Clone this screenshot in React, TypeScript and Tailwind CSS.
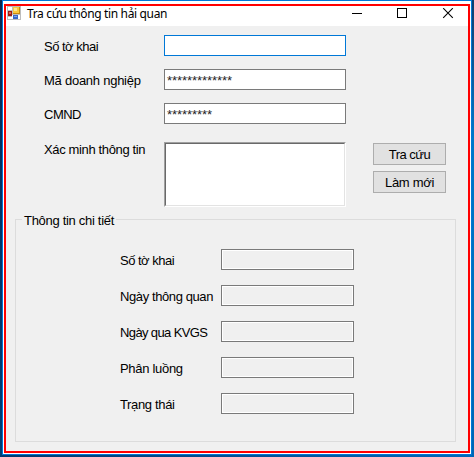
import React from "react";

type FieldProps = { label: string; labelClass: string; children: React.ReactNode };

function FormRow({ label, labelClass, children }: FieldProps) {
  return (
    <div className="flex h-[21px] items-start">
      <span className="w-[120px] shrink-0 pt-1 whitespace-nowrap">
        <span className={labelClass}>{label}</span>
      </span>
      {children}
    </div>
  );
}

function DetailRow({ label, labelClass }: { label: string; labelClass: string }) {
  return (
    <div className="flex h-[21px] items-start">
      <span className="w-[101px] shrink-0 pt-1 whitespace-nowrap">
        <span className={labelClass}>{label}</span>
      </span>
      <div className="h-[21px] w-[133px] border border-[#7a7a7a]">
        <div className="h-full border border-white bg-[#f0f0f0]" />
      </div>
    </div>
  );
}

function AppIcon() {
  return (
    <svg width="14" height="14" viewBox="0 0 14 14" shapeRendering="crispEdges">
      <rect width="14" height="14" fill="#bdbdbd" />
      <rect x="1" y="1" width="4" height="3" fill="#fff" />
      <rect x="5" y="9" width="8" height="4" fill="#fff" />
      <rect x="1" y="11" width="4" height="2" fill="#fff" />
      <rect x="6" y="1" width="7" height="7" fill="#c98a10" />
      <rect x="6" y="1" width="6" height="6" fill="#f9c93c" />
      <rect x="7" y="2" width="3" height="3" fill="#ffe590" />
      <rect x="1" y="5" width="4" height="5" fill="#9c1c12" />
      <rect x="2" y="6" width="2" height="2" fill="#e0604c" />
      <rect x="6" y="9" width="5" height="4" fill="#3768c8" />
      <rect x="7" y="10" width="3" height="1" fill="#7aa8f0" />
    </svg>
  );
}

function WindowButtons() {
  return (
    <svg width="102" height="12" viewBox="0 0 102 12" fill="none" stroke="#000">
      <path d="M0 5.5h10" shapeRendering="crispEdges" />
      <path d="M45.5 0.5h9v9h-9z" shapeRendering="crispEdges" />
      <path d="M91.2 0.2l9.6 9.6M100.8 0.2l-9.6 9.6" strokeWidth="1.1" />
    </svg>
  );
}

const button =
  "flex h-[22px] w-[73px] justify-center border border-[#adadad] bg-[#e1e1e1] pt-[3px] leading-4 whitespace-nowrap";

const maskedInput =
  "h-[21px] w-[182px] border border-[#7a7a7a] bg-white pt-[3px] pl-[2px] tracking-[-0.06px] text-[#222222]";

export default function App() {
  return (
    <div className="flex h-[457px] w-[474px] overflow-hidden bg-linear-to-r from-[#003a6e] to-[#0069ba] font-['Liberation_Sans',Arial,sans-serif] text-[13px] leading-4 text-black">
      <div className="h-full w-[2px] shrink-0 bg-linear-to-b from-[#0a2850] via-[#003468] to-[#003e74]" />
      <div className="h-[455px] w-[470px] shrink-0 border border-[#0078d7] bg-white px-px pt-[3px] pb-px">
        <div className="flex h-[449px] w-[466px] flex-col border-2 border-[#ff0000]">
          <header className="flex h-5 shrink-0 items-start bg-white pl-px">
            <AppIcon />
            <h1 className="w-[324px] pl-[6px] font-['Noto_Sans','Open_Sans',sans-serif] text-[12px] leading-[15px] tracking-[-0.35px] whitespace-nowrap">
              Tra cứu thông tin hải quan
            </h1>
            <div className="pt-[2px] pl-[7px]">
              <WindowButtons />
            </div>
          </header>
          <main className="flex-1 bg-[#f0f0f0] pt-[9px] pl-[9px]">
            <div className="flex flex-col gap-[13px] pl-[29px]">
              <FormRow label="Số tờ khai" labelClass="tracking-[-0.5px]">
                <div className="h-[21px] w-[182px] border border-[#0078d7] bg-white" />
              </FormRow>
              <FormRow label="Mã doanh nghiệp" labelClass="tracking-[-0.25px]">
                <div className={maskedInput}>*************</div>
              </FormRow>
              <FormRow label="CMND" labelClass="tracking-[-0.5px]">
                <div className={maskedInput}>*********</div>
              </FormRow>
            </div>
            <div className="mt-[18px] flex h-[65px] items-start pl-[29px]">
              <span className="w-[120px] shrink-0 tracking-[-0.36px] whitespace-nowrap">Xác minh thông tin</span>
              <div className="h-[65px] w-[182px] border border-t-[#a0a0a0] border-r-white border-b-white border-l-[#a0a0a0]">
                <div className="h-full border border-t-[#696969] border-r-[#e3e3e3] border-b-[#e3e3e3] border-l-[#696969] bg-white" />
              </div>
              <div className="mt-px ml-[27px] flex flex-col gap-[6px]">
                <button className={button}>
                  <span className="tracking-[-0.5px]">Tra cứu</span>
                </button>
                <button className={button}>
                  <span className="tracking-[-0.3px]">Làm mới</span>
                </button>
              </div>
            </div>
            <section className="relative mt-3 h-[223px] w-[441px] border border-[#dcdcdc] pt-[29px] pl-[104px]">
              <h2 className="absolute -top-[7px] left-[6px] bg-[#f0f0f0] pr-[2px] pl-[2px] tracking-[-0.3px] whitespace-nowrap">
                Thông tin chi tiết
              </h2>
              <div className="flex flex-col gap-[15px]">
                <DetailRow label="Số tờ khai" labelClass="tracking-[-0.5px]" />
                <DetailRow label="Ngày thông quan" labelClass="tracking-[-0.4px]" />
                <DetailRow label="Ngày qua KVGS" labelClass="tracking-[-0.62px]" />
                <DetailRow label="Phân luồng" labelClass="tracking-[-0.3px]" />
                <DetailRow label="Trạng thái" labelClass="tracking-[-0.35px]" />
              </div>
            </section>
          </main>
        </div>
      </div>
      <div className="h-full w-[2px] shrink-0 bg-linear-to-b from-[#0e3f6e] via-[#0078c8] via-30% to-[#0066b4]" />
    </div>
  );
}
